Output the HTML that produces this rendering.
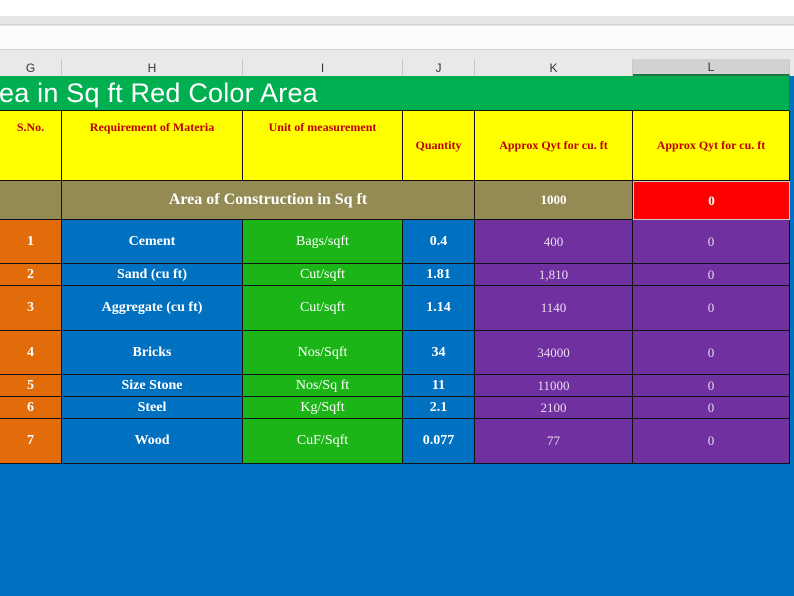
<!DOCTYPE html>
<html><head><style>
body{margin:0;width:794px;height:596px;background:#0070c0;position:relative;overflow:hidden;font-family:"Liberation Serif",serif}
div{position:absolute;box-sizing:border-box}
.c{display:flex;align-items:center;justify-content:center;border-right:1px solid #111;border-bottom:1px solid #111;color:#fff;font-size:14px;text-align:center}
.b{font-weight:bold}
.y{background:#ffff00;color:#c00000;font-weight:bold;font-size:12px}
.p{background:#7030a0;font-size:13px;color:#e8dcf0}
.h{top:59px;height:17px;background:#e9e9e9;border-right:1px solid #c8c8c8;font-family:"Liberation Sans",sans-serif;font-size:12px;color:#333;display:flex;align-items:center;justify-content:center}
</style></head><body>
<div style="left:0;top:0;width:794px;height:76px;background:#e9e9e9"></div>
<div style="left:0;top:0;width:794px;height:16px;background:#fff"></div>
<div style="left:0;top:16px;width:794px;height:9px;background:#e6e6e6;border-bottom:1px solid #d0d0d0"></div>
<div style="left:0;top:26px;width:794px;height:24px;background:#fbfbfb;border-bottom:1px solid #d0d0d0"></div>
<div class="h" style="left:0;width:62px">G</div>
<div class="h" style="left:62px;width:181px">H</div>
<div class="h" style="left:243px;width:160px">I</div>
<div class="h" style="left:403px;width:72px">J</div>
<div class="h" style="left:475px;width:158px">K</div>
<div class="h" style="left:633px;width:157px;background:#d2d2d2;border-bottom:2px solid #217346">L</div>
<div style="left:0;top:76px;width:790px;height:35px;background:#00b050;border-bottom:1px solid #111;color:#fff;font-family:'Liberation Sans',sans-serif;font-size:27px;line-height:34px;letter-spacing:0.2px;white-space:nowrap;left:-1px">ea in Sq ft Red Color Area</div>
<div class="c y" style="left:0;top:111px;width:62px;height:70px;align-items:flex-start;padding-top:9px">S.No.</div>
<div class="c y" style="left:62px;top:111px;width:181px;height:70px;align-items:flex-start;padding-top:9px">Requirement of Materia</div>
<div class="c y" style="left:243px;top:111px;width:160px;height:70px;align-items:flex-start;padding-top:9px">Unit of measurement</div>
<div class="c y" style="left:403px;top:111px;width:72px;height:70px">Quantity</div>
<div class="c y" style="left:475px;top:111px;width:158px;height:70px">Approx Qyt for cu. ft</div>
<div class="c y" style="left:633px;top:111px;width:157px;height:70px">Approx Qyt for cu. ft</div>
<div class="c" style="left:0;top:181px;width:62px;height:39px;background:#948a54"></div>
<div class="c b" style="left:62px;top:181px;width:413px;height:39px;background:#948a54;font-size:16px;padding-right:0">Area of Construction in Sq ft</div>
<div class="c b" style="left:475px;top:181px;width:158px;height:39px;background:#948a54;font-size:13px">1000</div>
<div class="c b" style="left:633px;top:181px;width:157px;height:39px;background:#ff0000;font-size:13px;border:1px solid #ccc">0</div>
<div class="c b" style="left:0;top:220px;width:62px;height:44px;background:#e26b0a">1</div><div class="c b" style="left:62px;top:220px;width:181px;height:44px;background:#0070c0">Cement</div><div class="c" style="left:243px;top:220px;width:160px;height:44px;background:#1cb518">Bags/sqft</div><div class="c b" style="left:403px;top:220px;width:72px;height:44px;background:#0070c0">0.4</div><div class="c p" style="left:475px;top:220px;width:158px;height:44px">400</div><div class="c p" style="left:633px;top:220px;width:157px;height:44px">0</div>
<div class="c b" style="left:0;top:264px;width:62px;height:22px;background:#e26b0a">2</div><div class="c b" style="left:62px;top:264px;width:181px;height:22px;background:#0070c0">Sand (cu ft)</div><div class="c" style="left:243px;top:264px;width:160px;height:22px;background:#1cb518">Cut/sqft</div><div class="c b" style="left:403px;top:264px;width:72px;height:22px;background:#0070c0">1.81</div><div class="c p" style="left:475px;top:264px;width:158px;height:22px">1,810</div><div class="c p" style="left:633px;top:264px;width:157px;height:22px">0</div>
<div class="c b" style="left:0;top:286px;width:62px;height:45px;background:#e26b0a">3</div><div class="c b" style="left:62px;top:286px;width:181px;height:45px;background:#0070c0">Aggregate (cu ft)</div><div class="c" style="left:243px;top:286px;width:160px;height:45px;background:#1cb518">Cut/sqft</div><div class="c b" style="left:403px;top:286px;width:72px;height:45px;background:#0070c0">1.14</div><div class="c p" style="left:475px;top:286px;width:158px;height:45px">1140</div><div class="c p" style="left:633px;top:286px;width:157px;height:45px">0</div>
<div class="c b" style="left:0;top:331px;width:62px;height:44px;background:#e26b0a">4</div><div class="c b" style="left:62px;top:331px;width:181px;height:44px;background:#0070c0">Bricks</div><div class="c" style="left:243px;top:331px;width:160px;height:44px;background:#1cb518">Nos/Sqft</div><div class="c b" style="left:403px;top:331px;width:72px;height:44px;background:#0070c0">34</div><div class="c p" style="left:475px;top:331px;width:158px;height:44px">34000</div><div class="c p" style="left:633px;top:331px;width:157px;height:44px">0</div>
<div class="c b" style="left:0;top:375px;width:62px;height:22px;background:#e26b0a">5</div><div class="c b" style="left:62px;top:375px;width:181px;height:22px;background:#0070c0">Size Stone</div><div class="c" style="left:243px;top:375px;width:160px;height:22px;background:#1cb518">Nos/Sq ft</div><div class="c b" style="left:403px;top:375px;width:72px;height:22px;background:#0070c0">11</div><div class="c p" style="left:475px;top:375px;width:158px;height:22px">11000</div><div class="c p" style="left:633px;top:375px;width:157px;height:22px">0</div>
<div class="c b" style="left:0;top:397px;width:62px;height:22px;background:#e26b0a">6</div><div class="c b" style="left:62px;top:397px;width:181px;height:22px;background:#0070c0">Steel</div><div class="c" style="left:243px;top:397px;width:160px;height:22px;background:#1cb518">Kg/Sqft</div><div class="c b" style="left:403px;top:397px;width:72px;height:22px;background:#0070c0">2.1</div><div class="c p" style="left:475px;top:397px;width:158px;height:22px">2100</div><div class="c p" style="left:633px;top:397px;width:157px;height:22px">0</div>
<div class="c b" style="left:0;top:419px;width:62px;height:45px;background:#e26b0a">7</div><div class="c b" style="left:62px;top:419px;width:181px;height:45px;background:#0070c0">Wood</div><div class="c" style="left:243px;top:419px;width:160px;height:45px;background:#1cb518">CuF/Sqft</div><div class="c b" style="left:403px;top:419px;width:72px;height:45px;background:#0070c0">0.077</div><div class="c p" style="left:475px;top:419px;width:158px;height:45px">77</div><div class="c p" style="left:633px;top:419px;width:157px;height:45px">0</div>
</body></html>
